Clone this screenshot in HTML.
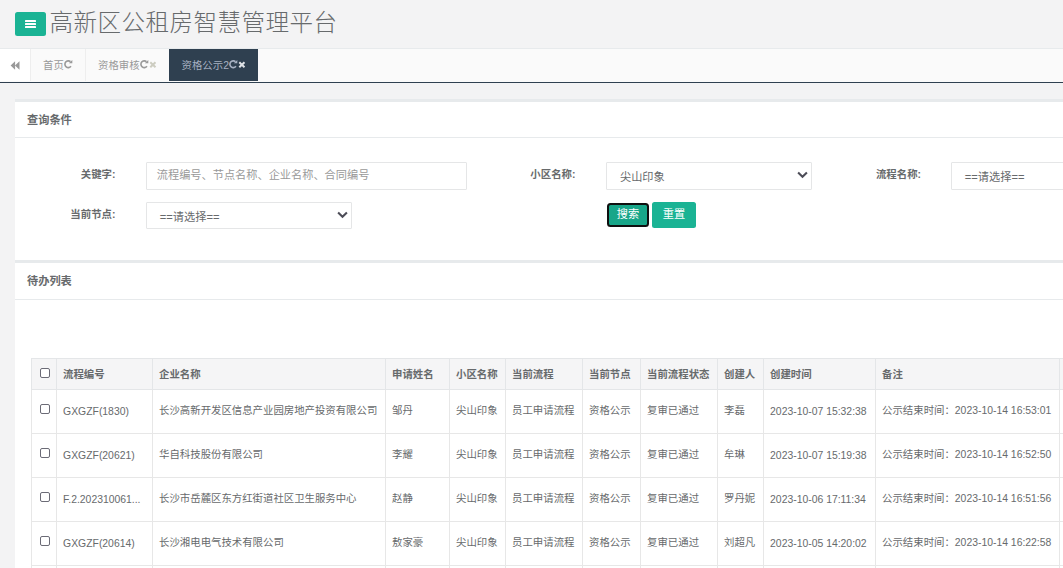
<!DOCTYPE html>
<html lang="zh-CN">
<head>
<meta charset="utf-8">
<title>高新区公租房智慧管理平台</title>
<style>
*{box-sizing:border-box;}
html,body{margin:0;padding:0;}
body{width:1063px;height:568px;overflow:hidden;background:#f3f3f4;color:#676a6c;
  font-family:"Liberation Sans","Noto Sans CJK SC",sans-serif;font-size:10.4px;position:relative;}
.abs{position:absolute;}
/* header */
#hdr{left:0;top:0;width:1063px;height:49px;border-bottom:1px solid #e7eaec;background:#f3f3f4;}
#menu{left:15px;top:12px;width:31px;height:24px;border-radius:2.5px;background:#1ab394;}
#menu i{position:absolute;left:10.2px;width:10.6px;height:2.1px;background:#fff;border-radius:.6px;display:block;}
#title{left:49.6px;top:5px;height:36px;line-height:36px;font-size:23.6px;font-weight:300;color:#676a6c;white-space:nowrap;letter-spacing:.4px;}
/* tabs */
#tabs{left:0;top:49px;width:1063px;height:34px;background:#fafafa;border-bottom:1px solid #2f4050;}
#roll{left:0;top:0;width:30.5px;height:32px;background:#fff;border-right:1px solid #eee;}
.tab{top:0;height:32px;line-height:33px;color:#999;white-space:nowrap;border-right:1px solid #eee;padding-left:12.6px;font-size:10.4px;}
.tab svg{vertical-align:-1.2px;}
.tab svg.rf{position:relative;top:-.9px;}
.tab.act{background:#2f4050;color:#a7b1c2;border-right:none;}
/* panels */
.panel{left:15px;width:1100px;background:#fff;border-top:3px solid #e7eaec;}
.ptitle{left:12px;font-size:11.2px;font-weight:700;color:#676a6c;white-space:nowrap;line-height:14px;}
.pline{left:0;width:1100px;height:1px;background:#e7eaec;}
.lbl{font-weight:700;font-size:10.4px;white-space:nowrap;text-align:right;line-height:14px;color:#676a6c;}
.ctl{height:28px;border:1px solid #e5e6e7;background:#fff;border-radius:1px;font-size:11.2px;line-height:25px;white-space:nowrap;color:#676a6c;overflow:hidden;}
.ctl.ph{color:#999;padding-left:9.8px;line-height:24px;}
.ctl.sel{padding-left:12.8px;padding-top:1.8px;}
.chev{position:absolute;right:3px;top:8.4px;}
.btn{height:26.4px;line-height:25.4px;color:#fff;font-size:11.2px;text-align:center;background:#1ab394;border-radius:2.5px;white-space:nowrap;}
/* table */
table{border-collapse:collapse;table-layout:fixed;position:absolute;left:31px;top:358px;width:1147.5px;font-size:10.4px;color:#676a6c;}
th,td{border:1px solid #e7e7e7;padding:0 0 0 6.6px;text-align:left;white-space:nowrap;overflow:hidden;vertical-align:middle;}
th{background:#f5f5f6;font-weight:700;height:31px;border-color:#e4e6e8;}
td{height:44px;background:#fff;}
.cb{display:block;width:10px;height:10px;border:1px solid #6b6b76;border-radius:2px;background:#fff;margin-left:1.2px;position:relative;top:-1.3px;}
th .cb{top:-.6px;}
td{padding-bottom:3.4px;}
th{padding-bottom:.8px;}
.l{position:relative;top:1.4px;}
</style>
</head>
<body>
<!-- header -->
<div id="hdr" class="abs">
  <div id="menu" class="abs"><i style="top:7.6px"></i><i style="top:10.9px"></i><i style="top:14.2px"></i></div>
  <div id="title" class="abs">高新区公租房智慧管理平台</div>
</div>
<!-- tabs -->
<div id="tabs" class="abs">
  <div id="roll" class="abs">
    <svg class="abs" style="left:10px;top:11px" width="11" height="11" viewBox="0 0 11 11"><path d="M5.1 1.2 L5.1 9.8 L0.6 5.5 Z M9.5 1.2 L9.5 9.8 L5 5.5 Z" fill="#999"/></svg>
  </div>
  <div class="tab abs" style="left:30.5px;width:55px;">首页<svg class="rf" width="8.9" height="10" viewBox="0 0 8.9 10"><path d="M7.0 7.35 A3.4 3.4 0 1 1 6.5 2.6" fill="none" stroke="#999" stroke-width="1.6"/><path d="M8.3 0.9 L8.3 4.3 L4.9 4.3 Z" fill="#999"/></svg></div>
  <div class="tab abs" style="left:85.5px;width:84px;">资格审核<svg class="rf" width="8.9" height="10" viewBox="0 0 8.9 10"><path d="M7.0 7.35 A3.4 3.4 0 1 1 6.5 2.6" fill="none" stroke="#999" stroke-width="1.6"/><path d="M8.3 0.9 L8.3 4.3 L4.9 4.3 Z" fill="#999"/></svg><svg width="8.2" height="10" viewBox="0 0 8.2 10"><path d="M1.3 2.3 L6.5 7.3 M6.5 2.3 L1.3 7.3" fill="none" stroke="#cdcdc1" stroke-width="2"/></svg></div>
  <div class="tab act abs" style="left:169px;width:89px;">资格公示2<svg class="rf" width="8.9" height="10" viewBox="0 0 8.9 10"><path d="M7.0 7.35 A3.4 3.4 0 1 1 6.5 2.6" fill="none" stroke="#a7b1c2" stroke-width="1.6"/><path d="M8.3 0.9 L8.3 4.3 L4.9 4.3 Z" fill="#a7b1c2"/></svg><svg width="8.2" height="10" viewBox="0 0 8.2 10"><path d="M1.3 2.3 L6.5 7.3 M6.5 2.3 L1.3 7.3" fill="none" stroke="#dfe2e6" stroke-width="2"/></svg></div>
</div>

<!-- panel 1 -->
<div class="panel abs" style="top:99px;height:162px;">
  <div class="ptitle abs" style="top:10.5px;">查询条件</div>
  <div class="pline abs" style="top:35px;"></div>

  <div class="lbl abs" style="left:40px;width:60.4px;top:66.4px;">关键字:</div>
  <div class="ctl ph abs" style="left:131px;top:60px;width:320.6px;">流程编号、节点名称、企业名称、合同编号</div>

  <div class="lbl abs" style="left:500px;width:60.4px;top:66.4px;">小区名称:</div>
  <div class="ctl sel abs" style="left:591.2px;top:60px;width:205.6px;">尖山印象<svg class="chev" width="11" height="8" viewBox="0 0 11 8"><path d="M1.1 1.5 L5.5 5.7 L9.9 1.5" fill="none" stroke="#4d4d58" stroke-width="2.1"/></svg></div>

  <div class="lbl abs" style="left:845px;width:61px;top:66.4px;">流程名称:</div>
  <div class="ctl sel abs" style="left:936px;top:60px;width:205.6px;">==请选择==</div>

  <div class="lbl abs" style="left:40px;width:60.4px;top:105.8px;">当前节点:</div>
  <div class="ctl sel abs" style="left:131px;top:100px;width:205.6px;height:27px;">==请选择==<svg class="chev" width="11" height="8" viewBox="0 0 11 8"><path d="M1.1 1.5 L5.5 5.7 L9.9 1.5" fill="none" stroke="#4d4d58" stroke-width="2.1"/></svg></div>

  <div class="btn abs" style="left:592px;top:101px;width:42px;height:24px;line-height:19px;border:2px solid #101010;background:#18a689;border-radius:3.5px;box-shadow:0 0 0 1px #fff;">搜索</div>
  <div class="btn abs" style="left:637px;top:100px;width:43.8px;">重置</div>
</div>

<!-- panel 2 -->
<div class="panel abs" style="top:260px;height:400px;">
  <div class="ptitle abs" style="top:11.4px;">待办列表</div>
  <div class="pline abs" style="top:36px;"></div>
</div>

<table>
<colgroup><col style="width:24.5px"><col style="width:96px"><col style="width:233px"><col style="width:64px"><col style="width:56px"><col style="width:77px"><col style="width:58px"><col style="width:77px"><col style="width:46px"><col style="width:112px"><col style="width:184px"><col style="width:120px"></colgroup>
<thead><tr><th><span class="cb"></span></th><th>流程编号</th><th>企业名称</th><th>申请姓名</th><th>小区名称</th><th>当前流程</th><th>当前节点</th><th>当前流程状态</th><th>创建人</th><th>创建时间</th><th>备注</th><th></th></tr></thead>
<tbody>
<tr><td><span class="cb"></span></td><td><span class="l">GXGZF(1830)</span></td><td>长沙高新开发区信息产业园房地产投资有限公司</td><td>邹丹</td><td>尖山印象</td><td>员工申请流程</td><td>资格公示</td><td>复审已通过</td><td>李磊</td><td><span class="l">2023-10-07 15:32:38</span></td><td>公示结束时间：2023-10-14 16:53:01</td><td></td></tr>
<tr><td><span class="cb"></span></td><td><span class="l">GXGZF(20621)</span></td><td>华自科技股份有限公司</td><td>李耀</td><td>尖山印象</td><td>员工申请流程</td><td>资格公示</td><td>复审已通过</td><td>牟琳</td><td><span class="l">2023-10-07 15:19:38</span></td><td>公示结束时间：2023-10-14 16:52:50</td><td></td></tr>
<tr><td><span class="cb"></span></td><td><span class="l">F.2.202310061...</span></td><td>长沙市岳麓区东方红街道社区卫生服务中心</td><td>赵静</td><td>尖山印象</td><td>员工申请流程</td><td>资格公示</td><td>复审已通过</td><td>罗丹妮</td><td><span class="l">2023-10-06 17:11:34</span></td><td>公示结束时间：2023-10-14 16:51:56</td><td></td></tr>
<tr><td><span class="cb"></span></td><td><span class="l">GXGZF(20614)</span></td><td>长沙湘电电气技术有限公司</td><td>敖家豪</td><td>尖山印象</td><td>员工申请流程</td><td>资格公示</td><td>复审已通过</td><td>刘超凡</td><td><span class="l">2023-10-05 14:20:02</span></td><td>公示结束时间：2023-10-14 16:22:58</td><td></td></tr>
<tr><td><span class="cb"></span></td><td></td><td></td><td></td><td></td><td></td><td></td><td></td><td></td><td></td><td></td><td></td></tr>
</tbody>
</table>
</body>
</html>
